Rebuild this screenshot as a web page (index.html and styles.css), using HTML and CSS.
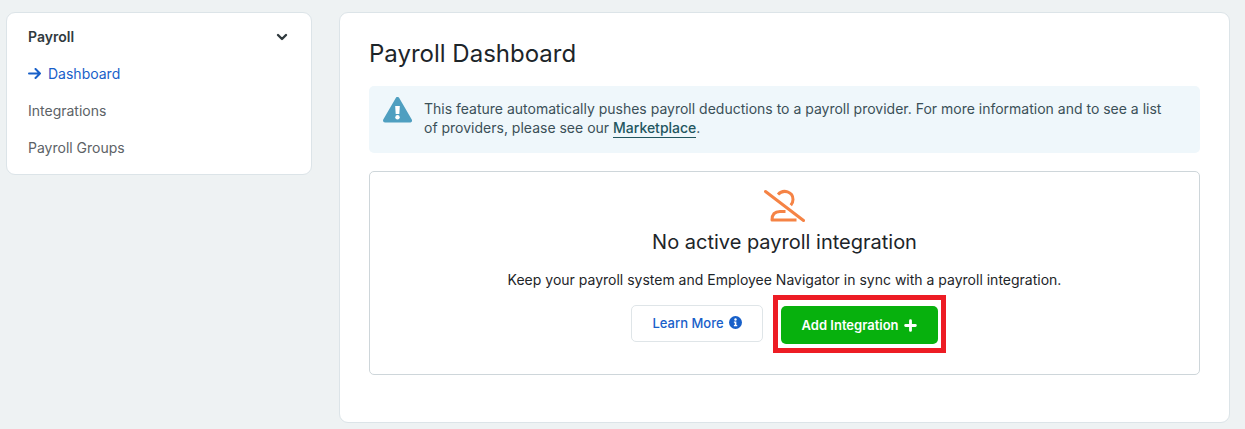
FILE: index.html
```html
<!DOCTYPE html>
<html lang="en">
<head>
    <meta charset="UTF-8">
    <meta name="viewport" content="width=device-width, initial-scale=1.0">
    <title>Payroll Dashboard</title>
    <link rel="stylesheet" href="styles.css">
</head>
<body>
    <div class="layout">
        <nav class="sidebar">
            <button type="button" class="sidebar-title">
                Payroll
                <svg width="12" height="8" viewBox="0 0 12 8" aria-hidden="true">
                    <path d="M2 2l4 4 4-4" fill="none" stroke="currentColor" stroke-width="2.400" stroke-linecap="round" stroke-linejoin="round"/>
                </svg>
            </button>
            <a href="#" class="sidebar-link active">
                <svg width="14" height="12" viewBox="0 0 14 12" aria-hidden="true">
                    <path d="M1 5.500h11M7.500 1L12 5.500 7.500 10" fill="none" stroke="currentColor" stroke-width="2" stroke-linecap="round" stroke-linejoin="round"/>
                </svg>
                Dashboard
            </a>
            <a href="#" class="sidebar-link">Integrations</a>
            <a href="#" class="sidebar-link">Payroll Groups</a>
        </nav>

        <main class="content">
            <h1>Payroll Dashboard</h1>

            <div class="notice">
                <svg class="notice-icon" width="29" height="26" viewBox="0 0 29 26" aria-hidden="true">
                    <path d="M14.500 2L27 23.500H2z" fill="#4f9fc0" stroke="#4f9fc0" stroke-width="4" stroke-linejoin="round"/>
                    <path d="M12.200 9h4.600l-.5 8h-3.600z" fill="#fff"/>
                    <circle cx="14.500" cy="20.300" r="2.200" fill="#fff"/>
                </svg>
                <p>This feature automatically pushes payroll deductions to a payroll provider. For more information and to see a list of providers, please see our <a href="#">Marketplace</a>.</p>
            </div>

            <section class="empty-state">
                <svg width="42" height="34" viewBox="0 0 42 34" fill="none" stroke="#f58345" stroke-width="3" aria-hidden="true">
                    <path d="M1.500 2.500l38 29" stroke-linecap="round"/>
                    <path d="M14 5.500C19.500-0.500 29 3 29 10.500c0 2.200-.8 4-2.200 5.700"/>
                    <path d="M21.500 22.500H16c-5.500 0-8 3-8 8.500h24.500" stroke-linejoin="round"/>
                </svg>
                <h2>No active payroll integration</h2>
                <p>Keep your payroll system and Employee Navigator in sync with a payroll integration.</p>
                <div class="actions">
                    <button type="button" class="btn btn-outline">
                        Learn More
                        <svg width="13" height="13" viewBox="0 0 12 12" aria-hidden="true">
                            <circle cx="6" cy="6" r="6" fill="currentColor"/>
                            <circle cx="6" cy="3.200" r="1.100" fill="#fff"/>
                            <path d="M4.500 5h2.300v3.300h.8v1.200H4.500V8.300h.8V6.200h-.8z" fill="#fff"/>
                        </svg>
                    </button>
                    <div class="highlight">
                        <button type="button" class="btn btn-primary">
                            Add Integration
                            <svg width="13" height="13" viewBox="0 0 12 12" aria-hidden="true">
                                <path d="M6 1.500v9M1.500 6h9" stroke="currentColor" stroke-width="2.600" stroke-linecap="round"/>
                            </svg>
                        </button>
                    </div>
                </div>
            </section>
        </main>
    </div>
</body>
</html>
```

FILE: styles.css
```css
* {
    box-sizing: border-box;
}
body {
    margin: 0;
    padding: 12px 15px 6px 6px;
    background-color: #eef2f3;
    color: #1d2529;
    font-family: Inter, sans-serif;
    font-size: 14px;
    line-height: 20px;
}
h1, h2, p {
    margin: 0;
    font-weight: 400;
}
.layout {
    display: grid;
    grid-template-columns: 306px 1fr;
    gap: 27px;
    align-items: start;
}
.sidebar, .content {
    background-color: #fff;
    border: 1px solid #dce4e8;
    border-radius: 9px;
}
.sidebar {
    display: flex;
    flex-direction: column;
    gap: 17px;
    padding: 14px 23px 16px 21px;
}
.sidebar-title {
    display: flex;
    justify-content: space-between;
    align-items: center;
    padding: 0;
    border: none;
    background: none;
    color: #303a3e;
    font: inherit;
    font-weight: 600;
    cursor: pointer;
}
.sidebar-link {
    display: flex;
    align-items: center;
    gap: 6px;
    color: #5c6266;
    text-decoration: none;
}
.sidebar-link.active {
    color: #1860c9;
}
.content {
    padding: 25px 29px 47px;
}
h1 {
    font-size: 24px;
    line-height: 32px;
}
.notice {
    display: flex;
    align-items: flex-start;
    gap: 12px;
    margin: 16px 0 18px;
    padding: 11px 32px 16px 14px;
    border-radius: 5px;
    background-color: #eff7fb;
    color: #3b5058;
}
.notice-icon {
    flex: none;
}
.notice p {
    padding-top: 2px;
    line-height: 19px;
}
.notice a {
    padding-bottom: 1px;
    border-bottom: 1px solid #23565f;
    color: #23565f;
    font-weight: 500;
    text-decoration: none;
}
.empty-state {
    display: flex;
    flex-direction: column;
    align-items: center;
    padding: 17px 16px 21px;
    border: 1px solid #ced6da;
    border-radius: 5px;
    text-align: center;
}
h2 {
    margin: 5px 0 14px;
    font-size: 20px;
    line-height: 28px;
}
.actions {
    display: flex;
    align-items: flex-start;
    gap: 10px;
    margin-top: 5px;
}
.btn {
    display: flex;
    align-items: center;
    justify-content: center;
    gap: 5px;
    height: 37px;
    padding: 0 20px;
    border: 1px solid transparent;
    border-radius: 5px;
    font: inherit;
    font-size: 13px;
    font-weight: 500;
    cursor: pointer;
}
.btn-outline {
    margin-top: 10px;
    padding-bottom: 2px;
    border-color: #dfe5e8;
    background-color: #fff;
    color: #1860c9;
}
.btn-primary {
    height: 38px;
    background-color: #07b10d;
    color: #fff;
    font-weight: 600;
}
/* frame sticks out past the button so the pair stays centered */
.highlight {
    margin-right: -8px;
    padding: 6px 3px 4px;
    border: 5px solid #ed1c24;
}
```
